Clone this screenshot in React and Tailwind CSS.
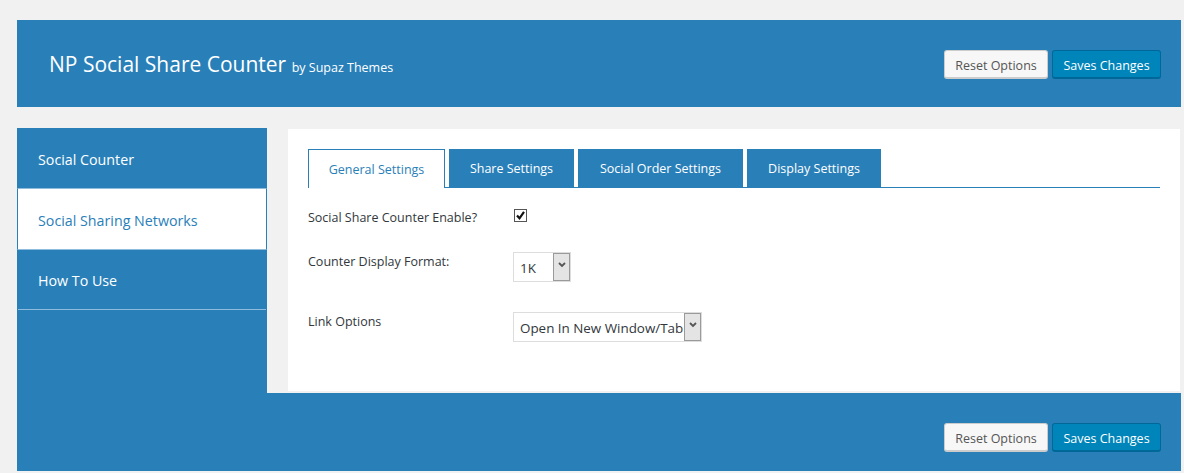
const tabs = [
  { label: "General Settings", width: "w-[137px]", active: true },
  { label: "Share Settings", width: "w-[125px]" },
  { label: "Social Order Settings", width: "w-[165px]" },
  { label: "Display Settings", width: "w-[134px]" },
];

function Buttons() {
  return (
    <div className="flex gap-1">
      <button className="h-[29px] w-[104px] rounded-[3px] border border-[#cccccc] border-b-2 bg-[#f7f7f7] pt-[5px] text-[12.5px] text-[#555555]">
        Reset Options
      </button>
      <button className="h-[29px] w-[109px] rounded-[3px] border border-[#006799] border-b-2 bg-[#0085ba] pt-[5px] text-[12.5px] text-white">
        Saves Changes
      </button>
    </div>
  );
}

function FakeSelect({ value, width, textWidth }) {
  return (
    <div className={`flex h-[30px] ${width} items-center border border-[#dddddd] bg-white text-[13.4px] text-[#32373c]`}>
      <span className={`${textWidth} overflow-hidden pt-[2px] pl-[6px] whitespace-nowrap`}>{value}</span>
      <span className="flex h-[28px] w-[17px] items-center justify-center border border-[#9a9a9a] bg-[#e4e4e4] pb-1">
        <svg width="8" height="6" viewBox="0 0 8 6" fill="none">
          <path d="M1 1l3 3 3-3" stroke="#555555" strokeWidth="1.8" />
        </svg>
      </span>
    </div>
  );
}

export default function App() {
  return (
    <div className="h-[473px] w-[1184px] overflow-hidden bg-[#f1f1f1] pt-5 pl-[17px] font-['Open_Sans',sans-serif]">
      <div className="w-[1164px]">
        {/* Header */}
        <div className="flex h-[87px] items-start justify-between bg-[#2980b9] pt-[30px] pr-5 pl-8 text-white">
          <h1 className="pt-[4px] text-[21px] leading-none whitespace-nowrap">
            NP Social Share Counter <span className="text-[12.5px]">by Supaz Themes</span>
          </h1>
          <Buttons />
        </div>

        <div className="mt-[21px] flex h-[265px]">
          {/* Sidebar */}
          <ul className="w-[250px] shrink-0 bg-[#2980b9] text-[14.25px]">
            <li className="flex h-[60px] items-center pt-1 pl-[21px] text-white">Social Counter</li>
            <li className="flex h-[62px] items-center border border-x-[#2980b9] border-y-[#8fbbdc] bg-white pt-1 pl-5 text-[#2980b9]">
              Social Sharing Networks
            </li>
            <li className="mx-px flex h-[60px] items-center border-b border-[#8fbbdc] pt-[2px] pl-5 text-white">How To Use</li>
          </ul>

          {/* Settings panel */}
          <div className="mt-px mr-px mb-[2px] ml-[21px] flex-1 bg-white px-5 pt-5 text-[12.5px] text-[#32373c]">
            <div className="flex h-[39px] gap-1 border-b border-[#2980b9]">
              {tabs.map((tab) => (
                <div
                  key={tab.label}
                  className={
                    tab.active
                      ? `flex h-[39px] ${tab.width} items-center justify-center border border-b-0 border-[#2980b9] bg-white pt-[2px] text-[#2980b9]`
                      : `flex h-[38px] ${tab.width} items-center justify-center bg-[#2980b9] pt-[2px] text-white`
                  }
                >
                  {tab.label}
                </div>
              ))}
            </div>

            <div className="mt-[21px] flex items-start">
              <span className="w-[206px] leading-[17px]">Social Share Counter Enable?</span>
              <span className="flex h-[13px] w-[13px] items-center justify-center border border-[#555555] bg-white">
                <svg width="11" height="11" viewBox="0 0 11 11" fill="none">
                  <path d="M2 5.5l2.5 2.8L9 1.8" stroke="#111111" strokeWidth="2.2" />
                </svg>
              </span>
            </div>

            <div className="mt-[26px] flex items-start">
              <span className="w-[205px] pt-px leading-[17px]">Counter Display Format:</span>
              <FakeSelect value="1K" width="w-[58px]" textWidth="w-[39px]" />
            </div>

            <div className="mt-[30px] flex items-start">
              <span className="w-[205px] pt-px leading-[17px]">Link Options</span>
              <FakeSelect value="Open In New Window/Tab" width="w-[189px]" textWidth="w-[170px]" />
            </div>
          </div>
        </div>

        {/* Footer */}
        <div className="flex h-[78px] justify-end bg-[#2980b9] pt-[30px] pr-5">
          <Buttons />
        </div>
      </div>
    </div>
  );
}
